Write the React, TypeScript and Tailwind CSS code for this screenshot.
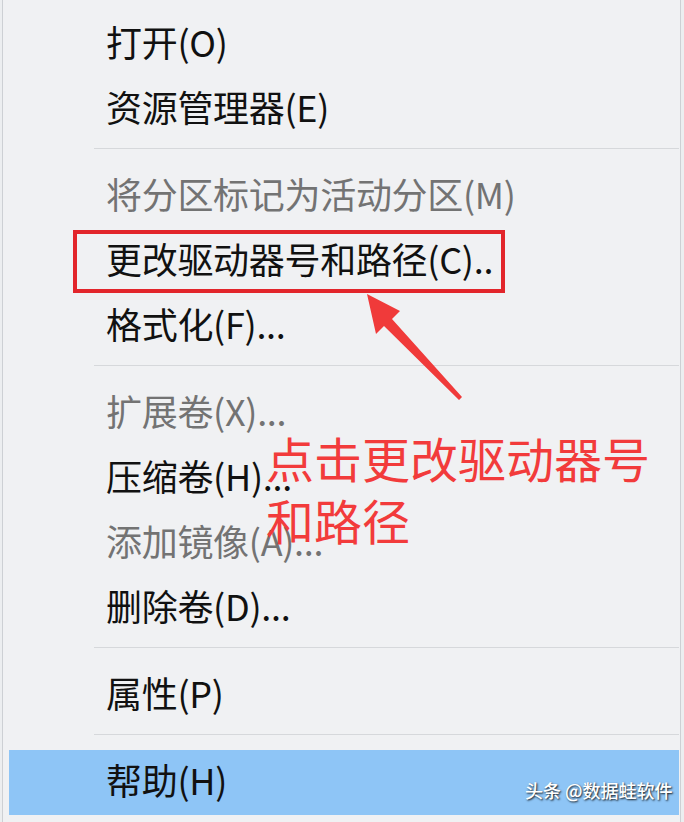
type Item = { label: string; disabled?: boolean; active?: boolean } | "sep"

const items: Item[] = [
  { label: "打开(O)" },
  { label: "资源管理器(E)" },
  "sep",
  { label: "将分区标记为活动分区(M)", disabled: true },
  { label: "更改驱动器号和路径(C).." },
  { label: "格式化(F)..." },
  "sep",
  { label: "扩展卷(X)...", disabled: true },
  { label: "压缩卷(H)..." },
  { label: "添加镜像(A)...", disabled: true },
  { label: "删除卷(D)..." },
  "sep",
  { label: "属性(P)" },
  "sep",
  { label: "帮助(H)", active: true },
]

const font = { fontFamily: '"Noto Sans CJK SC", "Noto Sans", sans-serif' }

export default function App() {
  return (
    <div className="relative h-[822px] w-[684px] overflow-hidden bg-[#eceef0]" style={font}>
      <div className="ml-[2px] h-full w-[679px] border-x border-[#cdd0d4] bg-[#f0f1f3] pl-[6px] pr-[1px] pt-[12px]">
        {items.map((it, i) =>
          it === "sep" ? (
            <div key={i} className="h-[22px] pt-[6px]">
              <div className="ml-[85px] h-px bg-[#d6d8db]" />
            </div>
          ) : (
            <div
              key={i}
              className={
                "flex h-[65px] items-center pb-[7px] pl-[97px] text-[36px] leading-none tracking-[-0.3px] " +
                (it.active ? "bg-[#8ec5f6] " : "") +
                (it.disabled ? "text-[#737373]" : "text-[#111111]")
              }
            >
              {it.label}
            </div>
          )
        )}
      </div>

      {/* red highlight box */}
      <div className="absolute left-[73px] top-[230px] h-[63px] w-[432px] border-[4px] border-[#e2252b]" />

      {/* arrow */}
      <svg className="absolute left-0 top-0" width="684" height="822" viewBox="0 0 684 822">
        <polygon
          points="367,294 400,311 392,319 462,397 459,400 384,326 376,334"
          fill="#f03a3a"
        />
      </svg>

      {/* annotation */}
      <div className="absolute left-[266px] top-[426px] text-[48px] leading-[62px] text-[#f23b3b]">
        <div>点击更改驱动器号</div>
        <div>和路径</div>
      </div>

      {/* watermark */}
      <div className="absolute left-[525px] top-[777px] text-[18px] font-medium text-white [text-shadow:1px_1px_2px_rgba(0,0,0,0.9)]">
        头条 @数据蛙软件
      </div>
    </div>
  )
}
